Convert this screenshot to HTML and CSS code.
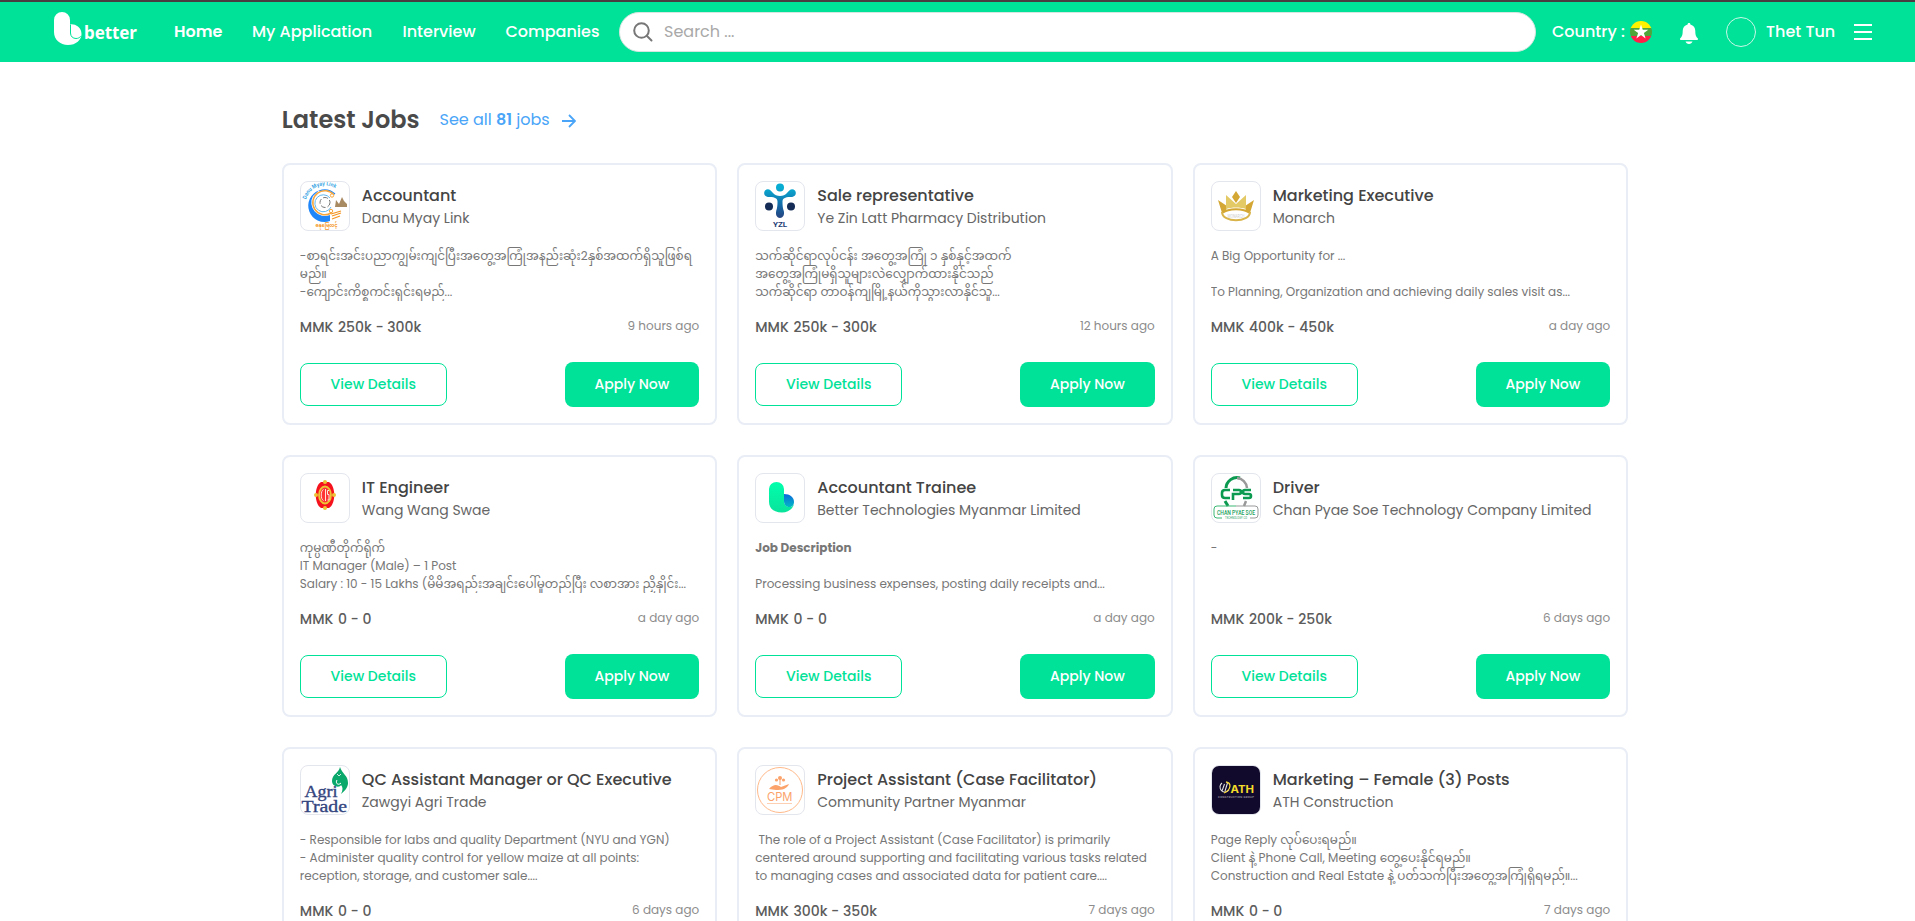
FILE: index.html
```html
<!DOCTYPE html>
<html lang="en">
<head>
<meta charset="utf-8">
<title>Better Jobs</title>
<link rel="stylesheet" href="styles.css">
</head>
<body>
<div class="app">
<header class="topbar">
  <a class="brand">
    <svg class="brand-mark" width="28" height="34" viewBox="0 0 28 34"><path d="M0 8a8 8 0 0 1 16 0v4.300a10 10 0 0 1 11.500 9.700c0 6-5.500 11-13.500 11S0 27.500 0 20z" fill="#fff"/><path d="M16.500 12.500v8.500c0 3.500 2.500 5.500 5.500 5.500 2 0 3.500-.8 4.700-2.200" fill="none" stroke="#00e298" stroke-width="1"/></svg>
    <span class="brand-name">better</span>
  </a>
  <nav class="nav">
    <a class="n-home">Home</a><a class="n-app">My Application</a><a class="n-int">Interview</a><a class="n-com">Companies</a>
  </nav>
  <div class="search">
    <svg width="20" height="20" viewBox="0 0 20 20" fill="none" stroke="#777" stroke-width="2" stroke-linecap="round"><circle cx="8.500" cy="8.500" r="7.300"/><path d="M14 14l4.500 4.500"/></svg>
    <span>Search ...</span>
  </div>
  <div class="country"><span>Country :</span>
    <svg width="22" height="22" viewBox="0 0 22 22"><clipPath id="fc"><circle cx="11" cy="11" r="11"/></clipPath><g clip-path="url(#fc)"><path fill="#fff200" d="M0 0h22v7.300H0z"/><path fill="#4ea63b" d="M0 7h22v8H0z"/><path fill="#ff1f48" d="M0 15h22v7H0z"/></g><path fill="#fff" d="M11 3.500l1.800 5.300h5.500l-4.400 3.300 1.700 5.300-4.600-3.300-4.600 3.300 1.700-5.300-4.400-3.300h5.500z"/></svg>
  </div>
  <svg class="bell" width="18" height="21" viewBox="0 0 18 21" fill="#fff"><path d="M9 0c.8 0 1.300.5 1.400 1.400C13.500 2.200 15.300 4.600 15.300 8c0 4.500 1 6 2.400 7.200.6.700.2 1.800-.8 1.800H1.100c-1 0-1.400-1.100-.8-1.800C1.700 14 2.700 12.500 2.700 8c0-3.400 1.800-5.800 4.900-6.600C7.700.5 8.200 0 9 0zM5.500 18.500h7C12 20 10.700 21 9 21s-3-1-3.500-2.500z"/></svg>
  <span class="avatar"></span>
  <span class="user">Thet Tun</span>
  <svg class="menu" width="18" height="16" viewBox="0 0 18 16" fill="#fff"><path d="M0 0h18v2H0zM0 7h18v2H0zM0 14h18v2H0z"/></svg>
</header>
<main class="page">
  <div class="heading">
    <h1>Latest Jobs</h1>
    <a class="see-all">See all <b>81</b> jobs</a>
    <svg width="14" height="14" viewBox="0 0 14 14" fill="none" stroke="#4aa5f8" stroke-width="1.800"><path d="M0 7h13M7 1l6 6-6 6"/></svg>
  </div>
  <div class="grid">
    <article class="card">
      <div class="head"><div class="logo"><svg viewBox="0 0 48 48">
        <defs><path id="arc" d="M5 17.500A20 20 0 0 1 37 8"/></defs>
        <text font-size="5.500" font-weight="700" fill="#36a4e4" font-family="Inter" textLength="36" lengthAdjust="spacingAndGlyphs"><textPath href="#arc" textLength="36" lengthAdjust="spacingAndGlyphs">Danu Myay Link</textPath></text>
        <path d="M34 12A16 16 0 0 0 18 9" fill="none" stroke="#2087fa" stroke-width="1.200"/><path d="M18 8.500A16 16 0 1 0 29 39V33A13.500 13.500 0 0 1 12 14z" fill="#2087fa"/>
        <path d="M33 13A12 12 0 1 0 30 31" fill="none" stroke="#f6a63c" stroke-width="1.500"/><circle cx="31" cy="13.500" r="1.700" fill="#fff" stroke="#f6a63c"/><circle cx="30" cy="29" r="1.700" fill="#fff" stroke="#f6a63c"/>
        <path d="M29 16A8.500 8.500 0 1 0 30 25" fill="none" stroke="#62b6ee"/><circle cx="24" cy="20.500" r="5" fill="none" stroke="#777" stroke-dasharray="5 2"/>
        <path d="M34 25l1-7 3 4 3-7 2 4 3 3v3z" fill="#a88a63"/><path d="M30 32l10-3M31 34l9-3M31 37l8-3" stroke="#f49625" stroke-width="1.300"/>
        <text x="14.500" y="45" font-size="5.500" font-weight="700" fill="#f49625" textLength="22" lengthAdjust="spacingAndGlyphs">ဓနုမြေလင့်</text></svg></div>
        <div class="who"><h2>Accountant</h2><p>Danu Myay Link</p></div></div>
      <div class="desc"><p>-စာရင်းအင်းပညာကျွမ်းကျင်ပြီးအတွေ့အကြုံအနည်းဆုံး2နှစ်အထက်ရှိသူဖြစ်ရ</p><p>မည်။</p><p>-ကျောင်းကိစ္စကင်းရှင်းရမည်...</p></div>
      <div class="meta"><span class="pay">MMK <span>250k - 300k</span></span><span class="ago">9 hours ago</span></div>
      <div class="actions"><button class="view">View Details</button><button class="apply">Apply Now</button></div>
    </article>
    <article class="card">
      <div class="head"><div class="logo"><svg viewBox="0 0 48 48">
        <defs><linearGradient id="yz" x1="0" y1="6" x2="0" y2="36" gradientUnits="userSpaceOnUse"><stop offset="0" stop-color="#08acd2"/><stop offset=".6" stop-color="#1567a5"/><stop offset="1" stop-color="#27447f"/></linearGradient></defs>
        <g fill="url(#yz)"><circle cx="24" cy="5.500" r="4"/><path d="M9 8.500c3-3 6-.5 8 2.500 3 4 11 4 14 0 2-3 5-5.500 8-2.500 2.500 4-1 7-5 6.500-5 0-7.500 1.500-7.500 4.500 0 5 .5 7 1.300 9.500 1 4-1 7-3.800 7s-4.800-3-3.800-7c.8-2.500 1.300-4.500 1.300-9.500 0-3-2.500-4.500-7.500-4.500-4 .5-7.500-2.500-5-6.500z"/></g>
        <circle cx="13" cy="24.500" r="4" fill="#152c57"/><circle cx="35" cy="24.500" r="4" fill="#152c57"/>
        <text x="17" y="45" font-family="Roboto" font-size="8" font-weight="700" fill="#1c3d75" textLength="14">YZL</text></svg></div>
        <div class="who"><h2>Sale representative</h2><p>Ye Zin Latt Pharmacy Distribution</p></div></div>
      <div class="desc"><p>သက်ဆိုင်ရာလုပ်ငန်း အတွေ့အကြုံ ၁ နှစ်နှင့်အထက်</p><p>အတွေ့အကြုံမရှိသူများလဲလျှောက်ထားနိုင်သည်</p><p>သက်ဆိုင်ရာ တာဝန်ကျမြို့နယ်ကိုသွားလာနိုင်သူ...</p></div>
      <div class="meta"><span class="pay">MMK <span>250k - 300k</span></span><span class="ago">12 hours ago</span></div>
      <div class="actions"><button class="view">View Details</button><button class="apply">Apply Now</button></div>
    </article>
    <article class="card">
      <div class="head"><div class="logo"><svg viewBox="0 0 48 48">
        <path d="M24 9l4 6-4 6-4-6zM6 18l9 6-1 6-4 1zM42 18l-9 6 1 6 4 1z" fill="#d4a735"/><path d="M14 27V13l10 9 10-9v14c-6-2-14-2-20 0z" fill="#e4ca67"/>
        <path d="M10 31c7-5 21-5 28 0" fill="none" stroke="#d4a735" stroke-width="2"/><path d="M10 30c0 11 28 11 28 0" fill="none" stroke="#d9b44a" stroke-width="2"/><text x="15.500" y="36" font-size="4.500" fill="#ccc" font-family="Inter" textLength="17" lengthAdjust="spacingAndGlyphs">MONARCH</text></svg></div>
        <div class="who"><h2>Marketing Executive</h2><p>Monarch</p></div></div>
      <div class="desc"><p>A Big Opportunity for ...</p><p></p><p>To Planning, Organization and achieving daily sales visit as...</p></div>
      <div class="meta"><span class="pay">MMK <span>400k - 450k</span></span><span class="ago">a day ago</span></div>
      <div class="actions"><button class="view">View Details</button><button class="apply">Apply Now</button></div>
    </article>
    <article class="card">
      <div class="head"><div class="logo"><svg viewBox="0 0 48 48">
        <path d="M20 8h8c7 4 7 22 0 26h-8c-7-4-7-22 0-26z" fill="#f5121c"/><g fill="#ecc435"><circle cx="24" cy="8" r="2"/><circle cx="24" cy="34" r="2"/><circle cx="15" cy="21" r="2"/><circle cx="33" cy="21" r="2"/></g>
        <ellipse cx="24" cy="21" rx="6" ry="8.500" fill="#f33" stroke="#ecc435" stroke-width="1.800"/><path d="M22.500 15.500c-3 1-3 10 0 11M24.500 15v12M28 16.500h-1.500v4H28v5.500h-1.500" fill="none" stroke="#fde3d8" stroke-width="1"/></svg></div>
        <div class="who"><h2>IT Engineer</h2><p>Wang Wang Swae</p></div></div>
      <div class="desc"><p>ကုမ္ပဏီတိုက်ရိုက်</p><p>IT Manager (Male) – 1 Post</p><p>Salary : 10 - 15 Lakhs (မိမိအရည်းအချင်းပေါ်မူတည်ပြီး လစာအား ညှိနှိုင်း...</p></div>
      <div class="meta"><span class="pay">MMK <span>0 - 0</span></span><span class="ago">a day ago</span></div>
      <div class="actions"><button class="view">View Details</button><button class="apply">Apply Now</button></div>
    </article>
    <article class="card">
      <div class="head"><div class="logo"><svg viewBox="0 0 48 48">
        <defs><linearGradient id="bg" x1="0" y1="0" x2="0" y2="1"><stop offset="0" stop-color="#00ffac"/><stop offset="1" stop-color="#0ae39b"/></linearGradient><linearGradient id="bb" x1="0" y1="0" x2="0" y2="1"><stop offset="0" stop-color="#0d68dc"/><stop offset="1" stop-color="#00b9c4"/></linearGradient></defs>
        <path d="M13 15a7.500 7 0 0 1 15 0v12c0 4 3 6 6 6 2 0 3-1 4-3-1 5-6 8.500-12 8.500-8 0-13-4-13-11z" fill="url(#bg)"/><path d="M28 20c6 0 10 3.500 10 8 0 3-2 5-4.500 5-3 0-5.500-2-5.500-6z" fill="url(#bb)"/></svg></div>
        <div class="who"><h2>Accountant Trainee</h2><p>Better Technologies Myanmar Limited</p></div></div>
      <div class="desc"><p><b>Job Description</b></p><p></p><p>Processing business expenses, posting daily receipts and...</p></div>
      <div class="meta"><span class="pay">MMK <span>0 - 0</span></span><span class="ago">a day ago</span></div>
      <div class="actions"><button class="view">View Details</button><button class="apply">Apply Now</button></div>
    </article>
    <article class="card">
      <div class="head"><div class="logo"><svg viewBox="0 0 48 48">
        <path d="M14 14a11 11 0 0 1 14-10" fill="none" stroke="#0b9a50" stroke-width="3"/><path d="M25 4a11 11 0 0 1 10 10M34 27l-2 5" fill="none" stroke="#999" stroke-width="2.500"/><path d="M13 27l3 5" stroke="#0b9a50" stroke-width="3"/>
        <path d="M18 16h-5q-3 0-3 3v2q0 3 3 3h5M21 26v-6h6q2 0 2-2t-2-2h-6M39 16h-6q-2 0-2 2t2 2h4q2 0 2 2t-2 2h-6" fill="none" stroke="#0b9a50" stroke-width="2.600"/>
        <path d="M24 32H5q-3 0-3 3v6q0 3 3 3h5" fill="none" stroke="#3cb775"/><path d="M24 32h19q3 0 3 3v6q0 3-3 3h-5" fill="none" stroke="#999"/>
        <text x="5" y="40.500" font-family="Roboto" font-size="7.500" font-weight="500" fill="#18a05a" textLength="38" lengthAdjust="spacingAndGlyphs">CHAN PYAE SOE</text><text x="13" y="44.800" font-family="Roboto" font-size="2.600" fill="#18a05a" textLength="22">TECHNOLOGY CO</text></svg></div>
        <div class="who"><h2>Driver</h2><p>Chan Pyae Soe Technology Company Limited</p></div></div>
      <div class="desc"><p>-</p></div>
      <div class="meta"><span class="pay">MMK <span>200k - 250k</span></span><span class="ago">6 days ago</span></div>
      <div class="actions"><button class="view">View Details</button><button class="apply">Apply Now</button></div>
    </article>
    <article class="card">
      <div class="head"><div class="logo"><svg viewBox="0 0 48 48">
        <path d="M39 1c2 7 8 8 8 16 0 4-3 8-7 11 2-4 2-7 0-9-1 3-9 2-9-4 0-7 7-8 8-14z" fill="#0aa86a"/><path d="M36 14c-2 3 1 6 4 3" fill="none" stroke="#fff"/><path d="M36 8l2 2 2-2" fill="none" stroke="#fff" stroke-width=".8"/>
        <g font-family="Liberation Serif" fill="#34457f" stroke="#34457f" stroke-width=".35"><text x="3.500" y="31" font-size="16" textLength="33" lengthAdjust="spacingAndGlyphs">Agri</text><text x=".5" y="46" font-size="17" textLength="45.500" lengthAdjust="spacingAndGlyphs">Trade</text></g></svg></div>
        <div class="who"><h2>QC Assistant Manager or QC Executive</h2><p>Zawgyi Agri Trade</p></div></div>
      <div class="desc"><p>- Responsible for labs and quality Department (NYU and YGN)</p><p>- Administer quality control for yellow maize at all points:</p><p>reception, storage, and customer sale....</p></div>
      <div class="meta"><span class="pay">MMK <span>0 - 0</span></span><span class="ago">6 days ago</span></div>
      <div class="actions"><button class="view">View Details</button><button class="apply">Apply Now</button></div>
    </article>
    <article class="card">
      <div class="head"><div class="logo"><svg viewBox="0 0 48 48">
        <circle cx="24" cy="24" r="22.500" fill="none" stroke="#ffb98a" stroke-width="1"/><g fill="#fba36b"><circle cx="24" cy="12" r="2"/><circle cx="20.500" cy="14" r="1.600"/><circle cx="27.500" cy="14" r="1.600"/><path d="M23.500 12h1v7h-1zM13 23c5-6 9-4 12-2l8-3c-2 5-7 6-13 6z"/></g>
        <text x="11" y="34.500" font-family="Inter" font-size="12" fill="#fba36b" textLength="25.500" lengthAdjust="spacingAndGlyphs">CPM</text><path d="M11 37.500h25" stroke="#fcc4a0" stroke-width=".8"/></svg></div>
        <div class="who"><h2>Project Assistant (Case Facilitator)</h2><p>Community Partner Myanmar</p></div></div>
      <div class="desc"><p>&nbsp;The role of a Project Assistant (Case Facilitator) is primarily</p><p>centered around supporting and facilitating various tasks related</p><p>to managing cases and associated data for patient care....</p></div>
      <div class="meta"><span class="pay">MMK <span>300k - 350k</span></span><span class="ago">7 days ago</span></div>
      <div class="actions"><button class="view">View Details</button><button class="apply">Apply Now</button></div>
    </article>
    <article class="card">
      <div class="head"><div class="logo"><svg viewBox="0 0 48 48">
        <path fill="#120a2c" d="M0 0h48v48H0z"/><path d="M10 17a5 5 0 1 0 7 7M10 25l2.500-7M13 25l2.500-8" fill="none" stroke="#ddd" stroke-width="1.100"/><path d="M14 16c6 1 5 8-2 11" fill="none" stroke="#f4d437" stroke-width="1.300"/>
        <text x="18.500" y="27" font-family="Inter" font-size="11" font-weight="700" fill="#f4dc2b" textLength="23.500" lengthAdjust="spacingAndGlyphs">ATH</text><text x="6" y="31.500" font-family="Inter" font-size="2.600" fill="#ccc" textLength="36">CONSTRUCTION GROUP</text></svg></div>
        <div class="who"><h2>Marketing – Female (3) Posts</h2><p>ATH Construction</p></div></div>
      <div class="desc"><p>Page Reply လုပ်ပေးရမည်။</p><p>Client နဲ့ Phone Call, Meeting တွေ့ပေးနိုင်ရမည်။</p><p>Construction and Real Estate နဲ့ ပတ်သက်ပြီးအတွေ့အကြုံရှိရမည်။...</p></div>
      <div class="meta"><span class="pay">MMK <span>0 - 0</span></span><span class="ago">7 days ago</span></div>
      <div class="actions"><button class="view">View Details</button><button class="apply">Apply Now</button></div>
    </article>
  </div>
</main>
</div>
</body>
</html>
```
FILE: styles.css
```css
* { box-sizing: border-box; margin: 0; padding: 0; }
body { background: #fff; color: #4a4a4a; font-family: Poppins, Inter, "Noto Sans Myanmar", sans-serif; font-size: 16px; }
.app { height: 921px; overflow: hidden; }
svg { display: block; flex: none; }
.topbar { height: 62px; border-top: 2px solid #4a3b40; background: #00e298; color: #fff; display: flex; align-items: center; padding: 0 0 0 54px; font-weight: 500; white-space: nowrap; }
.brand { display: flex; width: 120px; height: 34px; margin-top: -6px; }
.brand-name { font: 700 17px/41px "Noto Sans", sans-serif; margin-left: 2px; letter-spacing: -.1px; }
.nav { display: flex; width: 445px; margin-top: -2px; }
.n-home { width: 78px; font-weight: 600; }
.n-app { width: 150.500px; }
.n-int { width: 103px; }
.search { width: 917px; height: 40px; border-radius: 20px; background: #fff; border: 1px solid #d5e5df; display: flex; align-items: center; padding-left: 13px; gap: 11px; color: #a9a9a9; font-weight: 400; }
.search span { margin-top: -1px; }
.country { display: flex; align-items: center; margin-left: 16px; width: 128px; }
.country span { width: 78px; margin-top: -2px; }
.bell { margin-top: 2px; }
.avatar { width: 30px; height: 30px; border: 1px solid #c9f8e7; border-radius: 50%; margin-left: 28px; }
.user { width: 88px; margin-left: 10px; margin-top: -2px; }
.page { width: 1346.400px; margin-left: 281.800px; }
.heading { display: flex; align-items: center; height: 36px; margin-top: 39px; }
.heading h1 { font-size: 24px; font-weight: 600; line-height: 36px; width: 157.700px; margin-top: 2px; }
.see-all { color: #4aa5f8; width: 122.300px; }
.see-all b { font-weight: 600; }
.heading svg { margin-top: 3px; }
.grid { display: grid; grid-template-columns: repeat(3, 1fr); gap: 30px 20px; margin-top: 26px; }
.card { border: 2px solid #e9edf5; border-radius: 8px; height: 262px; padding: 16px; }
.head { display: flex; gap: 12px; height: 50px; }
.logo { width: 50px; height: 50px; border: 1px solid #e4e6ee; border-radius: 8px; overflow: hidden; flex: none; }
.who { padding-top: 2.500px; white-space: nowrap; }
.who h2 { font-size: 16px; font-weight: 500; line-height: 24px; color: #444; }
.who p { font-size: 14px; line-height: 21px; color: #666; }
.desc { margin-top: 16px; height: 54px; overflow: hidden; font-size: 12px; color: #777; white-space: nowrap; }
.desc p { height: 18px; line-height: 18px; }
.meta { display: flex; justify-content: space-between; margin-top: 16px; height: 21px; line-height: 21px; }
.pay { font-size: 14px; font-weight: 500; color: #5c5c5c; }
.pay span { margin-left: 1px; }
.ago { font-size: 12px; color: #8c8c8c; line-height: 18px; }
.actions { display: flex; justify-content: space-between; align-items: center; margin-top: 24px; }
button { font-family: inherit; font-size: 14px; font-weight: 500; border-radius: 8px; }
.view { width: 147px; height: 43px; border: 1px solid #00e298; background: #fff; color: #00e298; }
.apply { width: 134.600px; height: 45px; border: 0; background: #00e298; color: #fff; }
```
